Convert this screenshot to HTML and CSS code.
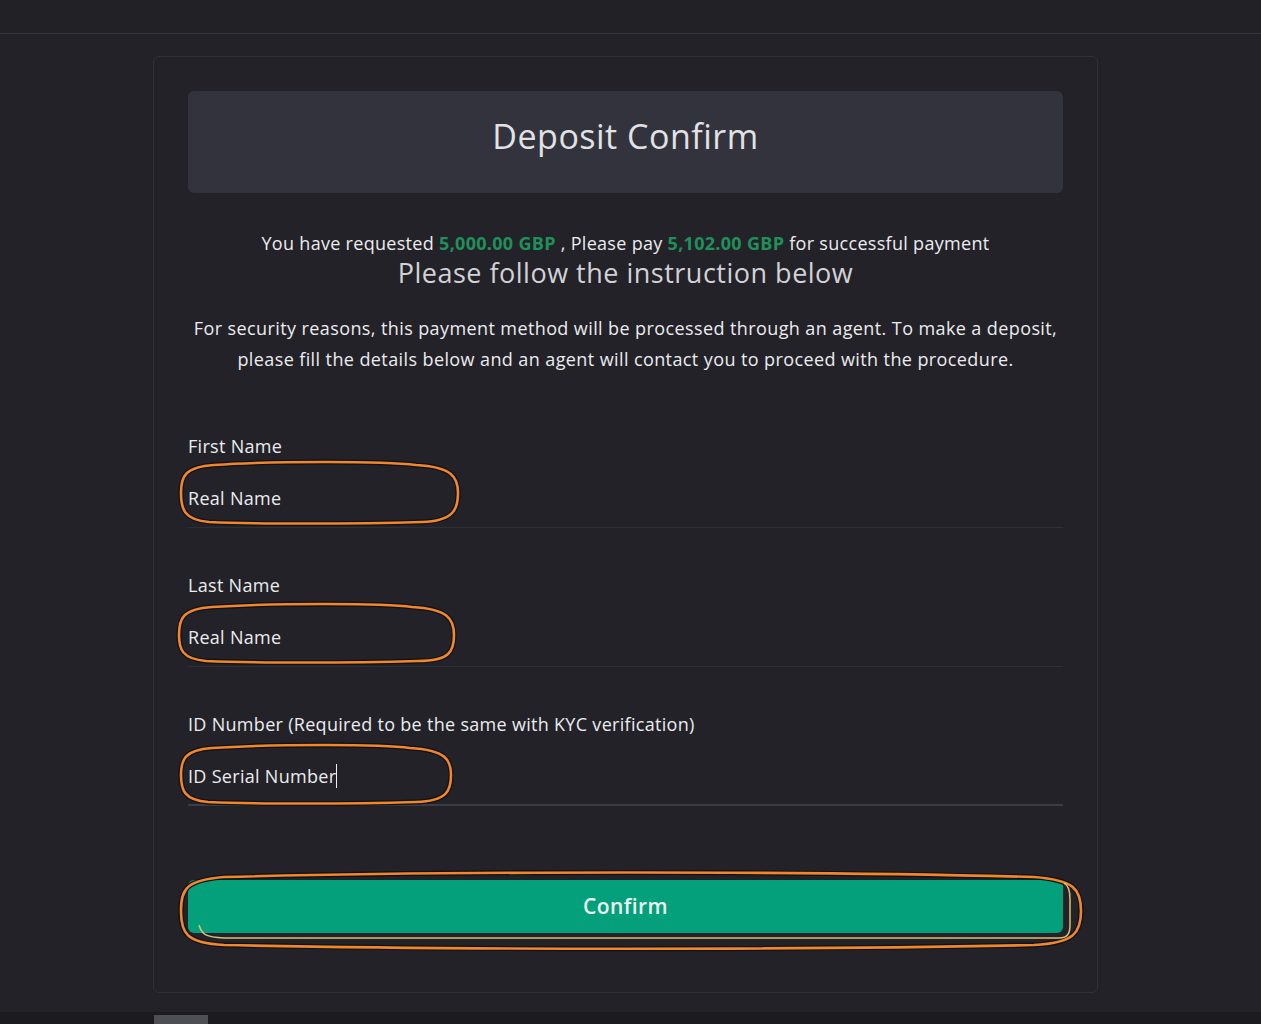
FILE: index.html
```html
<!DOCTYPE html>
<html lang="en">
<head>
<meta charset="utf-8">
<title>Deposit Confirm</title>
<link rel="stylesheet" href="styles.css">
</head>
<body>
<div class="topbar"></div>
<main class="page">
  <section class="card">
    <div class="card-header"><h1>Deposit Confirm</h1></div>
    <p class="request">You have requested <b class="amt">5,000.00 GBP</b> , Please pay <b class="amt">5,102.00 GBP</b> for successful payment</p>
    <h2 class="instr">Please follow the instruction below</h2>
    <p class="desc">For security reasons, this payment method will be processed through an agent. To make a deposit,<br>please fill the details below and an agent will contact you to proceed with the procedure.</p>
    <form class="form">
      <div class="field">
        <label>First Name</label>
        <div class="input">Real Name</div>
      </div>
      <div class="field">
        <label>Last Name</label>
        <div class="input">Real Name</div>
      </div>
      <div class="field">
        <label>ID Number (Required to be the same with KYC verification)</label>
        <div class="input focused">ID Serial Number<span class="caret"></span></div>
      </div>
      <button type="button" class="btn">Confirm</button>
    </form>
    <svg class="marks" width="945" height="937" viewBox="0 0 945 937" fill="none">
      <g stroke="#111" stroke-width="5">
        <path d="M60 408 C120 404 230 404 262 408 C298 410 304 420 304 436 C304 452 300 464 268 465 C200 467 100 467 55 465 C30 463 27 452 27 436 C27 420 30 410 60 408 Z"/>
        <path d="M58 550 C120 546 230 546 258 550 C294 552 300 562 300 578 C300 594 296 604 264 604 C196 606 100 606 52 604 C28 602 25 592 25 578 C25 562 28 552 58 550 Z"/>
        <path d="M58 691 C120 687 228 687 256 691 C292 693 297 703 297 718 C297 734 293 744 262 745 C196 747 100 747 54 745 C30 743 27 733 27 718 C27 703 30 693 58 691 Z"/>
        <path d="M70 820 C300 814 650 814 880 820 C920 823 927 832 927 854 C927 876 920 886 880 888 C650 893 300 893 70 888 C32 886 27 876 27 854 C27 832 32 823 70 820 Z"/>
      </g>
      <g stroke="#f0872e" stroke-width="2.6">
        <path d="M60 408 C120 404 230 404 262 408 C298 410 304 420 304 436 C304 452 300 464 268 465 C200 467 100 467 55 465 C30 463 27 452 27 436 C27 420 30 410 60 408 Z"/>
        <path d="M58 550 C120 546 230 546 258 550 C294 552 300 562 300 578 C300 594 296 604 264 604 C196 606 100 606 52 604 C28 602 25 592 25 578 C25 562 28 552 58 550 Z"/>
        <path d="M58 691 C120 687 228 687 256 691 C292 693 297 703 297 718 C297 734 293 744 262 745 C196 747 100 747 54 745 C30 743 27 733 27 718 C27 703 30 693 58 691 Z"/>
        <path d="M70 820 C300 814 650 814 880 820 C920 823 927 832 927 854 C927 876 920 886 880 888 C650 893 300 893 70 888 C32 886 27 876 27 854 C27 832 32 823 70 820 Z"/>
      </g>
      <path d="M45 868 C48 878 52 880 70 881 L905 881 C914 881 916 876 916 868 L916 842 C916 832 914 828 910 826" stroke="#d9c173" stroke-width="1.5"/>
    </svg>
  </section>
</main>
<footer class="footer"><span class="footer-tab"></span></footer>
</body>
</html>
```
FILE: styles.css
```css
* { box-sizing: border-box; }
html, body { margin: 0; padding: 0; }
body {
  background: #222228;
  color: #ececee;
  font-family: "Open Sans", "Liberation Sans", sans-serif;
  font-weight: 500;
  width: 1261px;
  height: 1024px;
  overflow: hidden;
}
.topbar {
  height: 34px;
  background: #212126;
  border-bottom: 1px solid #34353d;
}
.page {
  padding: 22px 0 0 153px;
}
.card {
  position: relative;
  width: 945px;
  height: 937px;
  border: 1px solid #30313a;
  border-radius: 6px;
  padding: 34px 34px 0 34px;
}
.card-header {
  background: #32333c;
  border-radius: 6px;
  height: 102px;
  display: flex;
  align-items: center;
  justify-content: center;
}
.card-header h1 {
  margin: 0 0 12px 0;
  font-size: 34px;
  font-weight: 500;
  color: #e2e2e4;
  letter-spacing: 0.5px;
}
.request {
  margin: 38px 0 0 0;
  text-align: center;
  font-size: 18px;
  line-height: 24px;
  letter-spacing: 0.3px;
}
.amt { color: #20905a; font-weight: 700; }
.instr {
  margin: 2px 0 0 0;
  text-align: center;
  font-size: 27px;
  line-height: 32px;
  font-weight: 500;
  color: #d2d2d6;
  letter-spacing: 0.5px;
}
.desc {
  margin: 24px -6px 0 -6px;
  text-align: center;
  font-size: 18px;
  line-height: 31px;
  letter-spacing: 0.4px;
  white-space: nowrap;
}
.form {
  margin-top: 59px;
  display: flex;
  flex-direction: column;
}
.field { margin-bottom: 45px; display: flex; flex-direction: column; }
.field:nth-child(3) { margin-bottom: 74px; }
.field label {
  font-size: 18px;
  line-height: 24px;
  letter-spacing: 0.3px;
}
.input {
  height: 70px;
  padding-top: 28px;
  font-size: 18px;
  line-height: 24px;
  letter-spacing: 0.3px;
  border-bottom: 1px solid #2e2f37;
  display: flex;
  align-items: flex-start;
}
.input.focused { border-bottom: 2px solid #3b3c44; }
.caret {
  display: inline-block;
  width: 1px;
  height: 24px;
  background: #f0f0f0;
}
.btn {
  height: 53px;
  padding-bottom: 3px;
  background: #03a07b;
  border: 0;
  border-radius: 6px;
  color: #eef6f2;
  font-family: inherit;
  font-size: 21px;
  font-weight: 600;
  letter-spacing: 0.4px;
}
.marks {
  position: absolute;
  left: 0;
  top: 0;
  pointer-events: none;
}
.footer {
  position: fixed;
  left: 0;
  top: 1012px;
  width: 1261px;
  height: 12px;
  background: #1b1b20;
}
.footer-tab {
  position: absolute;
  left: 154px;
  top: 3px;
  width: 54px;
  height: 9px;
  background: #4e4f55;
}
```
